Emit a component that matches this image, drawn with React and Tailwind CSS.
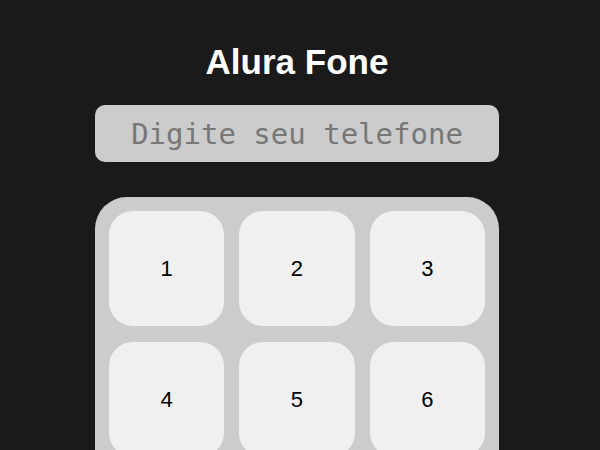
const keys = ['1', '2', '3', '4', '5', '6', '7', '8', '9', '*', '0', '#']

export default function App() {
  return (
    <div className="min-h-screen bg-[#1a1a1a] pr-[6px] font-['Liberation_Sans',Arial,sans-serif]">
      <div className="flex flex-col items-center pt-[42px]">
        <h1 className="text-[35px] leading-[40px] font-bold text-white">Alura Fone</h1>
        <input
          type="text"
          placeholder="Digite seu telefone"
          className="mt-[23px] h-[57px] w-[404px] rounded-[10px] bg-[#cccccc] text-center font-['DejaVu_Sans_Mono',monospace] text-[29px] text-black outline-none placeholder:text-[#777777]"
        />
        <div className="mt-[35px] grid w-[404px] grid-cols-3 gap-x-[15px] gap-y-4 rounded-[32px] bg-[#cccccc] p-[14px]">
          {keys.map((k) => (
            <button
              key={k}
              className="flex h-[115px] items-center justify-center rounded-[24px] bg-[#f0f0f0] text-[22px] text-black"
            >
              {k}
            </button>
          ))}
        </div>
      </div>
    </div>
  )
}
